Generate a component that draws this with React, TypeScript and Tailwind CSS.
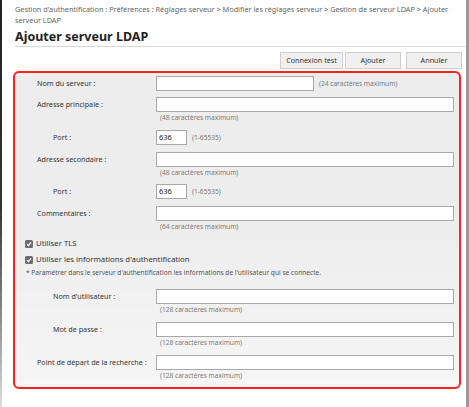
import React from 'react';

const font = { fontFamily: '"Noto Sans", "Open Sans", sans-serif' };

const Hint: React.FC<{ text: string }> = ({ text }) => (
  <div className="h-[12px] pl-[4px] text-[6.6px] leading-[12px] text-[#7a7a7a] whitespace-nowrap">{text}</div>
);

interface RowProps {
  label: string;
  indent?: boolean;
  hint?: string;
  inline?: string;
  short?: 'port' | 'mid';
  value?: string;
  className?: string;
}

const Row: React.FC<RowProps> = ({ label, indent, hint, inline, short, value, className }) => (
  <div className={`flex ${className ?? ''}`}>
    <div
      className={`w-[141px] shrink-0 h-[15px] flex items-center text-[7.2px] text-[#333] whitespace-nowrap ${
        indent ? 'pl-[38px]' : 'pl-[22px]'
      }`}
    >
      {label}
    </div>
    <div className="flex-1 flex flex-col">
      <div className="flex items-center">
        <div
          className={`h-[15px] bg-white border border-[#a9a9a9] text-[7.5px] leading-[13px] pl-[2px] text-[#222] ${
            short === 'port' ? 'w-[31px]' : short === 'mid' ? 'w-[158px]' : 'flex-1'
          }`}
        >
          {value}
        </div>
        {inline && <span className="ml-[5px] text-[6.6px] text-[#7a7a7a]">{inline}</span>}
      </div>
      {hint && <Hint text={hint} />}
    </div>
  </div>
);

const Check: React.FC<{ label: string; className?: string }> = ({ label, className }) => (
  <div className={`flex items-center pl-[10px] h-[10px] ${className ?? ''}`}>
    <span className="w-[8px] h-[8px] rounded-[1.5px] bg-[#6e6e6e] flex items-center justify-center">
      <svg width="6" height="6" viewBox="0 0 6 6">
        <path d="M1 3.2 L2.4 4.6 L5 1.4" stroke="white" strokeWidth="1.2" fill="none" />
      </svg>
    </span>
    <span className="ml-[3px] text-[7.8px] text-[#333]">{label}</span>
  </div>
);

const Btn: React.FC<{ label: string; w: string }> = ({ label, w }) => (
  <div className={`${w} h-[17px] flex items-center justify-center bg-[#f0f0f0] border border-[#cfcfcf] text-[7.2px] text-[#333]`}>
    {label}
  </div>
);

export default function App() {
  return (
    <div className="w-[469px] h-[407px] bg-white flex overflow-hidden" style={font}>
      <div className="w-[2px] shrink-0 bg-gradient-to-b from-[#222] via-[#333] to-[#ddd]" />
      <div className="flex-1 flex flex-col pl-[13px] pr-[1px]">
        <div className="pt-[4px] text-[7.3px] leading-[11px] text-[#666] pr-[2px]">
          Gestion d'authentification : Préférences : Réglages serveur &gt; Modifier les réglages serveur &gt; Gestion de serveur LDAP &gt; Ajouter serveur LDAP
        </div>
        <div className="mt-[2px] text-[12.5px] font-bold leading-[17px] text-[#222]">Ajouter serveur LDAP</div>
        <div className="h-px bg-[#d8d8d8] mt-[1px]" />
        <div className="flex justify-end gap-[2px] mt-[5px] pr-[3px]">
          <Btn label="Connexion test" w="w-[63px]" />
          <Btn label="Ajouter" w="w-[56px]" />
          <div className="w-px" />
          <Btn label="Annuler" w="w-[56px]" />
        </div>
        <div className="mt-[2px] w-[448px] h-[318px] -ml-[2px] border-2 border-[#ff2020] rounded-[6px] bg-gradient-to-b from-[#ededed] via-[#ededed] to-[#f6f6f6] pt-[3px] pr-[5px] flex flex-col">
          <Row label="Nom du serveur :" short="mid" inline="(24 caractères maximum)" />
          <Row className="mt-[6px]" label="Adresse principale :" hint="(48 caractères maximum)" />
          <Row className="mt-[6px]" label="Port :" indent short="port" value="636" inline="(1-65535)" />
          <Row className="mt-[7px]" label="Adresse secondaire :" hint="(48 caractères maximum)" />
          <Row className="mt-[5px]" label="Port :" indent short="port" value="636" inline="(1-65535)" />
          <Row className="mt-[7px]" label="Commentaires :" hint="(64 caractères maximum)" />
          <Check className="mt-[6px]" label="Utiliser TLS" />
          <Check className="mt-[6px]" label="Utiliser les informations d'authentification" />
          <div className="mt-[3px] pl-[11px] text-[6.6px] leading-[10px] text-[#555] whitespace-nowrap">
            * Paramétrer dans le serveur d'authentification les informations de l'utilisateur qui se connecte.
          </div>
          <Row className="mt-[11px]" label="Nom d'utilisateur :" indent hint="(128 caractères maximum)" />
          <Row className="mt-[6px]" label="Mot de passe :" indent hint="(128 caractères maximum)" />
          <Row className="mt-[6px]" label="Point de départ de la recherche :" hint="(128 caractères maximum)" />
        </div>
      </div>
      <div className="w-[3px] shrink-0 bg-[#9a9a9a]" />
    </div>
  );
}
